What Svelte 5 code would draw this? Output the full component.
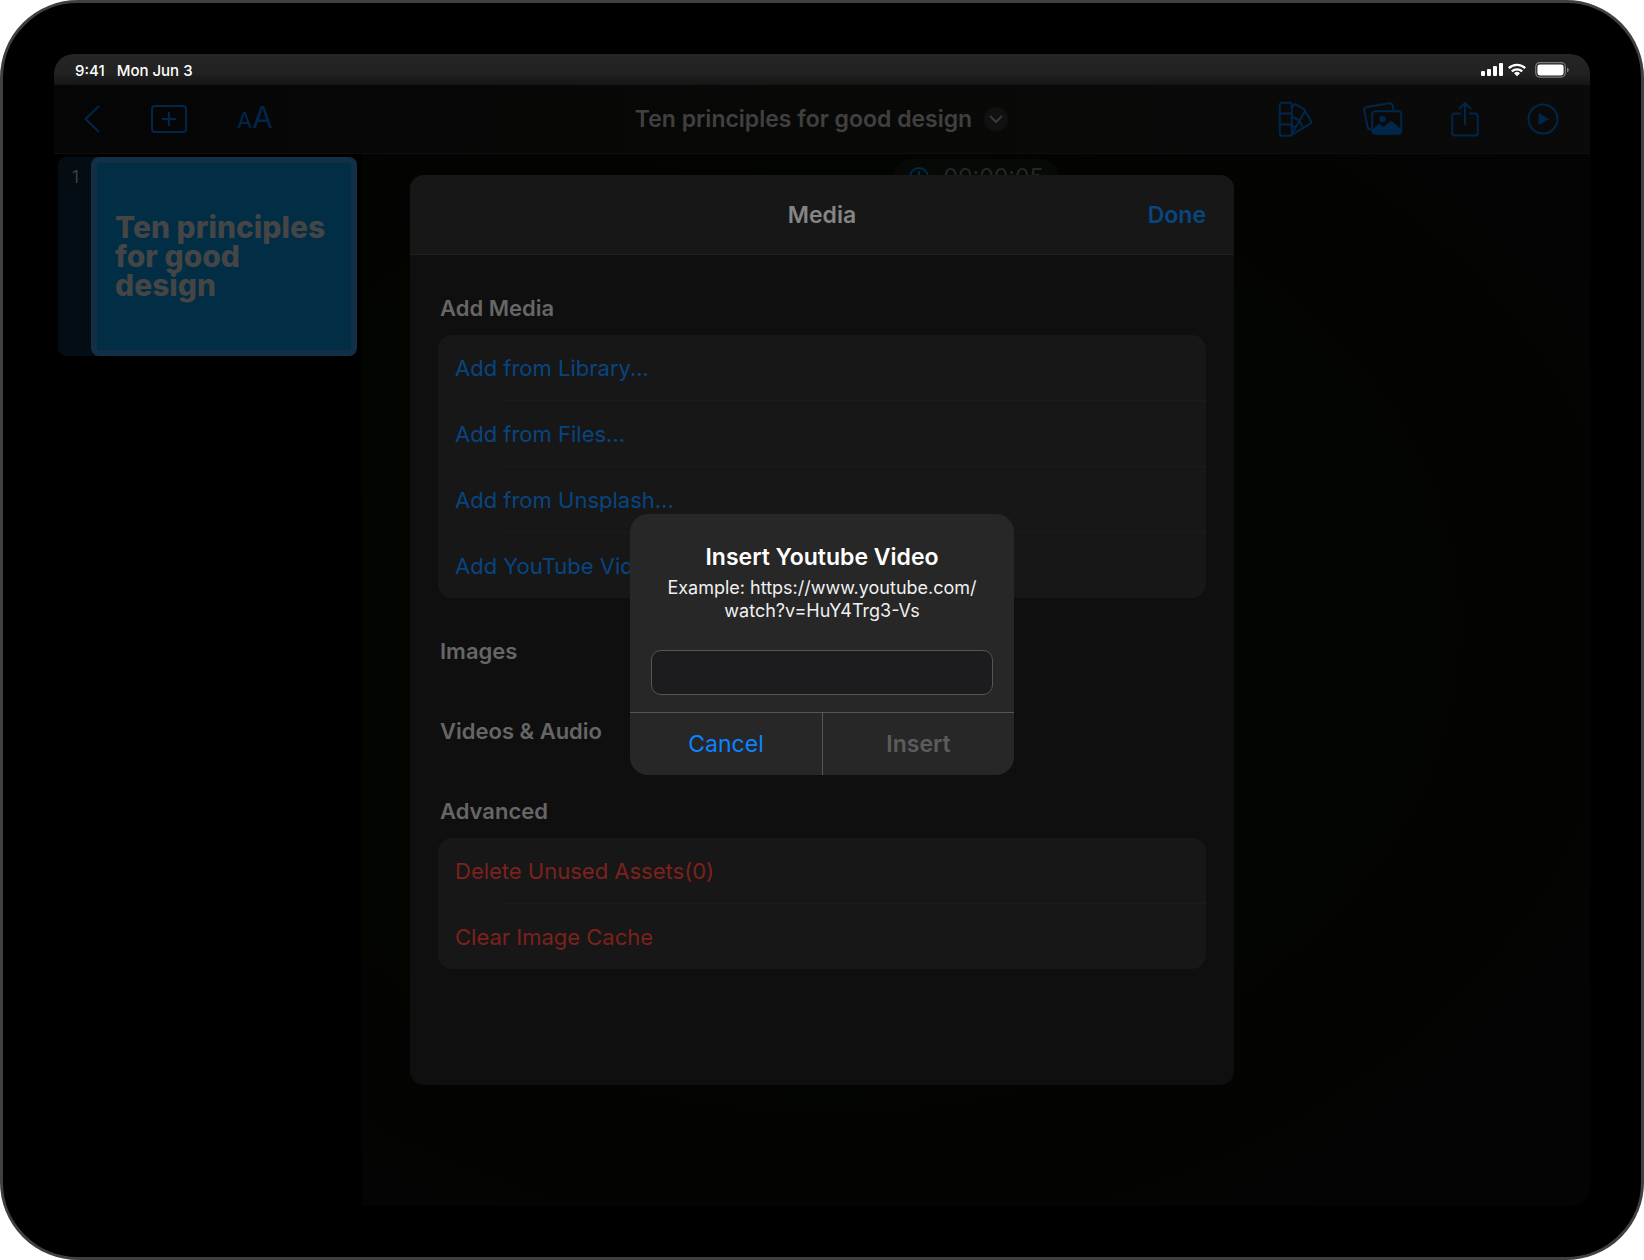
<script lang="ts">
  interface Row {
    label: string;
    danger?: boolean;
  }

  interface Section {
    title: string;
    rows: Row[];
  }

  const sections: Section[] = [
    {
      title: 'Add Media',
      rows: [
        { label: 'Add from Library...' },
        { label: 'Add from Files...' },
        { label: 'Add from Unsplash...' },
        { label: 'Add YouTube Video...' }
      ]
    },
    { title: 'Images', rows: [] },
    { title: 'Videos & Audio', rows: [] },
    {
      title: 'Advanced',
      rows: [
        { label: 'Delete Unused Assets(0)', danger: true },
        { label: 'Clear Image Cache', danger: true }
      ]
    }
  ];

  let videoUrl = $state('');
</script>

<div class="device">
  <div class="screen">
    <header class="status-bar">
      <span class="time">9:41</span>
      <span>Mon Jun 3</span>
      <div class="status-icons">
        <svg width="22" height="14" viewBox="0 0 22 14" fill="#fff">
          <rect x="0" y="8" width="4" height="5" rx="1" />
          <rect x="6" y="6" width="4" height="7" rx="1" />
          <rect x="12" y="3" width="4" height="10" rx="1" />
          <rect x="18" y="0" width="4" height="13" rx="1" />
        </svg>
        <svg width="18" height="14" viewBox="0 0 18 14" fill="none" stroke="#fff" stroke-width="2.3">
          <path d="M0.8 5.2a11.8 11.8 0 0 1 16.4 0" />
          <path d="M3.8 8.4a7.5 7.5 0 0 1 10.4 0" />
          <path d="M9 13.2L6 10.3a4.3 4.3 0 0 1 6 0z" fill="#fff" stroke="none" />
        </svg>
        <svg width="35" height="16" viewBox="0 0 35 16">
          <rect x="0.7" y="0.7" width="29.6" height="14.4" rx="4" fill="none" stroke="#7d7d7d" stroke-width="1.2" />
          <rect x="2.4" y="2.4" width="26.2" height="11" rx="2.4" fill="#fff" />
          <path d="M32 5.5c2.4 0.8 2.4 4 0 4.8z" fill="#7d7d7d" />
        </svg>
      </div>
    </header>

    <nav class="toolbar">
      <div class="tools">
        <button class="tool back" aria-label="Back">
          <svg width="16" height="28" viewBox="0 0 16 28">
            <path d="M14.5 1.5L1.5 14l13 12.5" />
          </svg>
        </button>
        <button class="tool add" aria-label="Add slide">
          <svg width="36" height="28" viewBox="0 0 36 28">
            <rect x="1" y="1" width="34" height="26" rx="3" />
            <path d="M18 7.5v13M11.5 14h13" />
          </svg>
        </button>
        <button class="tool text-size" aria-label="Text size">
          <span class="small-a">A</span><span>A</span>
        </button>
      </div>

      <button class="doc-title">
        Ten principles for good design
        <svg width="26" height="26" viewBox="0 0 26 26">
          <circle cx="13" cy="13" r="12" fill="#101110" />
          <path d="M7.5 10.5l5.5 5.5 5.5-5.5" fill="none" stroke="#3b3b3b" stroke-width="2" stroke-linecap="round" stroke-linejoin="round" />
        </svg>
      </button>

      <div class="tools right">
        <button class="tool" aria-label="Theme">
          <svg width="36" height="36" viewBox="0 0 36 36">
            <rect x="2.8" y="1.8" width="12" height="33" rx="2.5" />
            <path d="M3 12.500h12M3 23.500h12" />
            <path d="M15 6.200l1.400-1.900q1.200-1.500 2.900-0.600l7.600 4.400q1.700 1 0.800 2.700L15 32.500" />
            <path d="M15 15.500l8.200 4.500M15 24.500l3.500 1.900" />
            <path d="M27.800 11q1 0.200 1.600 1.200l4.600 7.800q0.900 1.700-0.700 2.700L14 34.300" />
            <path d="M22.300 20l3.900 6.800" />
          </svg>
        </button>
        <button class="tool photos" aria-label="Media">
          <svg width="40" height="34" viewBox="0 0 40 34">
            <path d="M8 27.2H7.2Q5 27.2 4.6 25L1.2 8.5Q0.900 5.500 3.800 5L26.500 1.300Q29.200 1 29.700 3.600L30.200 8" />
            <rect x="9.2" y="9.3" width="29" height="22.5" rx="3" />
            <circle class="solid" cx="19.5" cy="17" r="3.200" />
            <path class="solid" d="M10 27l6-5.500 4.500 3.500 7.500-6.500 10 8.500v2q0 2.500-2.500 2.500H12.500Q10 31.500 10 29z" />
          </svg>
        </button>
        <button class="tool share" aria-label="Share">
          <svg width="28" height="36" viewBox="0 0 28 36">
            <path d="M9 12.5H4q-2.800 0-2.800 2.800v16.400q0 2.800 2.800 2.800h20q2.800 0 2.800-2.800V15.300q0-2.800-2.800-2.800h-5" />
            <path d="M14 23V2M8.500 7.500L14 2l5.500 5.500" />
          </svg>
        </button>
        <button class="tool play" aria-label="Play">
          <svg width="32" height="32" viewBox="0 0 32 32">
            <circle cx="16" cy="16" r="14.5" />
            <path class="solid" d="M11.500 9.700v12.600l10.500-6.300z" />
          </svg>
        </button>
      </div>
    </nav>

    <main class="workspace">
      <aside class="slides">
        <button class="slide">
          <span class="number">1</span>
          <span class="thumb">Ten principles for good design</span>
        </button>
      </aside>
      <section class="canvas">
        <div class="timer">
          <svg width="20" height="20" viewBox="0 0 20 20" fill="none" stroke="#00294a" stroke-width="2">
            <circle cx="10" cy="10" r="9" />
            <path d="M10 4v7h4" />
          </svg>
          00:00:05
        </div>
      </section>
    </main>

    <div class="overlay">
      <section class="sheet">
        <header class="sheet-header">
          <h2>Media</h2>
          <button class="done">Done</button>
        </header>
        <div class="sheet-body">
          {#each sections as section}
            <h3>{section.title}</h3>
            {#if section.rows.length}
              <div class="group">
                {#each section.rows as row}
                  <button class="row" class:danger={row.danger}>{row.label}</button>
                {/each}
              </div>
            {/if}
          {/each}
        </div>
      </section>
    </div>

    <div class="overlay alert-overlay">
      <form class="alert">
        <div class="alert-content">
          <label class="alert-title" for="video-url">Insert Youtube Video</label>
          <p>Example: https://www.youtube.com/<wbr />watch?v=HuY4Trg3-Vs</p>
          <input id="video-url" type="text" bind:value={videoUrl} />
        </div>
        <div class="alert-actions">
          <button type="button" class="cancel">Cancel</button>
          <button type="submit" class="insert" disabled={!videoUrl}>Insert</button>
        </div>
      </form>
    </div>
  </div>
</div>

<style>
  :global(body) {
    margin: 0;
    background: #fff;
  }

  .device,
  .device * {
    box-sizing: border-box;
  }

  .device {
    display: flex;
    min-height: 100vh;
    padding: 51px;
    border: 3px solid #404040;
    border-radius: 78px;
    background: #000;
    font-family: Inter, 'Liberation Sans', sans-serif;
    font-size: 22px;
  }

  button {
    padding: 0;
    border: 0;
    background: none;
    color: inherit;
    font: inherit;
    cursor: pointer;
  }

  svg {
    display: block;
  }

  h2,
  h3,
  p {
    margin: 0;
  }

  .screen {
    position: relative;
    display: flex;
    flex: 1;
    flex-direction: column;
    overflow: hidden;
    border-radius: 20px;
    background: #000;
  }

  .status-bar {
    display: flex;
    align-items: center;
    gap: 12px;
    height: 31px;
    padding: 1px 20px 0 21px;
    background: linear-gradient(#252525, #222 60%, #151515);
    color: #fff;
    font-size: 15px;
    font-weight: 500;
  }

  .status-icons {
    display: flex;
    align-items: center;
    gap: 5px;
    margin-left: auto;
  }

  .status-icons svg:last-child {
    margin-left: 4px;
  }

  .toolbar {
    display: grid;
    grid-template-columns: 1fr auto 1fr;
    align-items: center;
    height: 69px;
    padding-bottom: 1px;
    border-bottom: 1px solid #0f0f0f;
    background: linear-gradient(90deg, #050505, #080907 50%, #0a0a0a);
  }

  .tools {
    display: flex;
    align-items: center;
    padding: 0 31px 0 30px;
  }

  .tools.right {
    justify-content: flex-end;
  }

  .tool {
    color: #00264a;
  }

  .tool svg {
    fill: none;
    stroke: currentColor;
    stroke-width: 2;
    stroke-linecap: round;
    stroke-linejoin: round;
  }

  .tool .solid {
    fill: currentColor;
    stroke: none;
  }

  .add {
    margin-left: 51px;
  }

  .text-size {
    margin-left: 50px;
    font-size: 30px;
    line-height: 36px;
  }

  .small-a {
    font-size: 22px;
  }

  .photos {
    margin-left: 50px;
  }

  .share,
  .play {
    margin-left: 48px;
  }

  .doc-title {
    display: flex;
    align-items: center;
    gap: 11px;
    color: #404040;
    font-size: 23px;
    font-weight: 600;
  }

  .workspace {
    display: flex;
    flex: 1;
  }

  .slides {
    width: 308px;
    padding: 3px 5px 0 4px;
  }

  .slide {
    display: flex;
    width: 100%;
    border-radius: 8px;
    background: #040c14;
    text-align: left;
  }

  .number {
    width: 33px;
    padding: 10px 0 0 2px;
    color: #404040;
    font-size: 17px;
    line-height: 20px;
    text-align: center;
  }

  .thumb {
    display: flex;
    flex: 1;
    align-items: center;
    height: 199px;
    padding: 0 12px 0 18px;
    border: 6px solid #132f45;
    border-radius: 8px;
    background: #012d45;
    color: #454545;
    font-size: 30px;
    font-weight: 800;
    line-height: 29px;
  }

  .canvas {
    display: flex;
    flex: 1;
    align-items: flex-start;
    justify-content: center;
    background: radial-gradient(ellipse at 38% 45%, #040700 0%, #030500 50%, #040404 85%);
  }

  .timer {
    display: flex;
    align-items: center;
    gap: 15px;
    height: 36px;
    margin-top: 5px;
    padding: 0 15px;
    border-radius: 18px;
    background: #070907;
    color: #272727;
    font-size: 23px;
  }

  .overlay {
    position: absolute;
    inset: 0;
    display: flex;
    align-items: center;
    justify-content: center;
  }

  .alert-overlay {
    top: 29px;
  }

  .sheet {
    width: 824px;
    overflow: hidden;
    border-radius: 14px;
    background: #0f0f0f;
  }

  .sheet-header {
    display: grid;
    grid-template-columns: 1fr auto 1fr;
    align-items: center;
    height: 80px;
    padding: 0 28px;
    border-bottom: 1px solid #202020;
    background: #171717;
  }

  h2 {
    grid-column: 2;
    color: #858585;
    font-size: 23px;
    font-weight: 600;
  }

  .done {
    justify-self: end;
    color: #084681;
    font-size: 23px;
    font-weight: 600;
  }

  .sheet-body {
    padding: 0 28px 116px;
  }

  h3 {
    padding: 39px 2px 13px;
    color: #666;
    font-size: 22px;
    font-weight: 600;
    line-height: 28px;
  }

  .group {
    overflow: hidden;
    border-radius: 14px;
    background: #171717;
  }

  .row {
    display: block;
    width: 100%;
    height: 65px;
    padding: 0 17px;
    color: #084580;
    text-align: left;
  }

  .row + .row {
    height: 66px;
    border-top: 1px solid;
    border-image: linear-gradient(90deg, transparent 64px, #1c1c1c 64px) 1;
  }

  .row.danger {
    color: #7d211c;
  }

  .alert {
    width: 384px;
    overflow: hidden;
    border-radius: 18px;
    background: #272727;
    color: #fff;
    text-align: center;
  }

  .alert-content {
    padding: 29px 21px 17px;
  }

  .alert-title {
    display: block;
    font-size: 23px;
    font-weight: 600;
    line-height: 28px;
  }

  .alert p {
    margin: 5px 0 28px;
    color: #f0f0f0;
    font-size: 18px;
    line-height: 23px;
  }

  .alert input {
    display: block;
    width: 100%;
    height: 45px;
    padding: 0 12px;
    border: 1px solid #565656;
    border-radius: 10px;
    outline: none;
    background: #1c1c1e;
    color: #fff;
    font: inherit;
  }

  .alert-actions {
    display: grid;
    grid-template-columns: 1fr 1fr;
    border-top: 1px solid #565656;
  }

  .alert-actions button {
    height: 62px;
    font-size: 23px;
  }

  .alert-actions .cancel {
    color: #0a84ff;
  }

  .alert-actions .insert {
    border-left: 1px solid #565656;
    color: #5c5c5c;
    font-weight: 600;
  }
</style>
